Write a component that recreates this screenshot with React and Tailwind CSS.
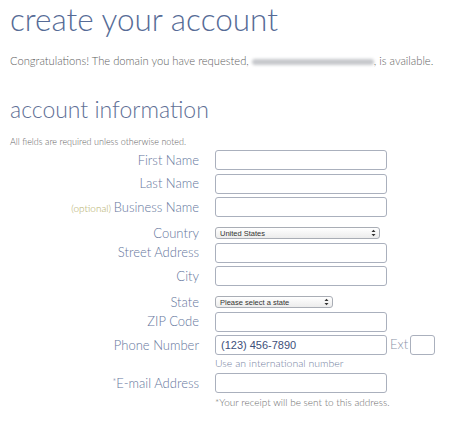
import React from "react";

const FONT = { fontFamily: "Lato, 'Open Sans', sans-serif" };

function TextField({ value, className = "w-[172px]" }) {
  return (
    <div
      className={`h-[20px] rounded-[3px] border border-[#aab0bd] bg-white px-[5px] flex items-center text-[11px] text-[#3d4f7a] ${className}`}
      style={{ fontFamily: "'Liberation Sans', Arial, sans-serif" }}
    >
      {value}
    </div>
  );
}

function SelectBox({ value, width }) {
  return (
    <div
      className={`h-[12px] ${width} rounded-[3px] border border-[#a9adb5] bg-gradient-to-b from-white to-[#ececec] flex items-center justify-between pl-[4px] pr-[3px] text-[7.5px] text-[#333]`}
      style={{ fontFamily: "'Liberation Sans', Arial, sans-serif" }}
    >
      <span>{value}</span>
      <svg width="5" height="8" viewBox="0 0 5 8">
        <path d="M0.5 3 L2.5 0.8 L4.5 3 Z" fill="#333" />
        <path d="M0.5 5 L2.5 7.2 L4.5 5 Z" fill="#333" />
      </svg>
    </div>
  );
}

function Row({ label, optional, required, children, select }) {
  return (
    <div className={`flex items-center ${select ? "h-[11.5px] mt-[7px]" : "h-[20px]"}`}>
      <div className="w-[189px] shrink-0 text-right text-[13px] font-light leading-none text-[#65769c]">
        {optional && <span className="text-[10px] text-[#b1aa62]">(optional) </span>}
        {required && <span className="text-[9px] align-top">*</span>}
        {label}
      </div>
      <div className="ml-[16px] flex items-center">{children}</div>
    </div>
  );
}

export default function App() {
  return (
    <div className="w-[450px] h-[421px] bg-white overflow-hidden pl-[10px]" style={FONT}>
      <h1 className="pt-[1px] text-[31.5px] font-light leading-[36px] text-[#566b96]">
        create your account
      </h1>

      <p className="mt-[17px] text-[11.2px] font-light leading-[14px] text-[#5e5e5e]">
        Congratulations! The domain you have requested,{" "}
        <span className="inline-block w-[122px] h-[6px] rounded-full bg-[#c6c8cc] blur-[1.5px] align-middle" />
        , is available.
      </p>

      <h2 className="mt-[27px] text-[23px] font-light leading-[28px] text-[#5f7096]">
        account information
      </h2>

      <p className="mt-[13px] text-[9px] font-light leading-[11px] text-[#666]">
        All fields are required unless otherwise noted.
      </p>

      <div className="mt-[3px] flex flex-col gap-[3.5px]">
        <Row label="First Name">
          <TextField />
        </Row>
        <Row label="Last Name">
          <TextField />
        </Row>
        <Row label="Business Name" optional>
          <TextField />
        </Row>
        <Row label="Country" select>
          <SelectBox value="United States" width="w-[165px]" />
        </Row>
        <Row label="Street Address">
          <TextField />
        </Row>
        <Row label="City">
          <TextField />
        </Row>
        <Row label="State" select>
          <SelectBox value="Please select a state" width="w-[118px]" />
        </Row>
        <Row label="ZIP Code">
          <TextField />
        </Row>
        <Row label="Phone Number">
          <TextField value="(123) 456-7890" />
          <span className="ml-[3px] text-[13px] font-light text-[#8a93a8]">Ext</span>
          <TextField className="w-[25px] ml-[2px]" />
        </Row>
      </div>
      <div className="ml-[205px] mt-[2px] text-[10.5px] font-light leading-[12px] text-[#7380a0]">
        Use an international number
      </div>

      <div className="mt-[4px]">
        <Row label="E-mail Address" required>
          <TextField />
        </Row>
      </div>
      <div className="ml-[205px] mt-[3px] text-[10px] font-light leading-[12px] text-[#6e6e6e]">
        *Your receipt will be sent to this address.
      </div>
    </div>
  );
}
